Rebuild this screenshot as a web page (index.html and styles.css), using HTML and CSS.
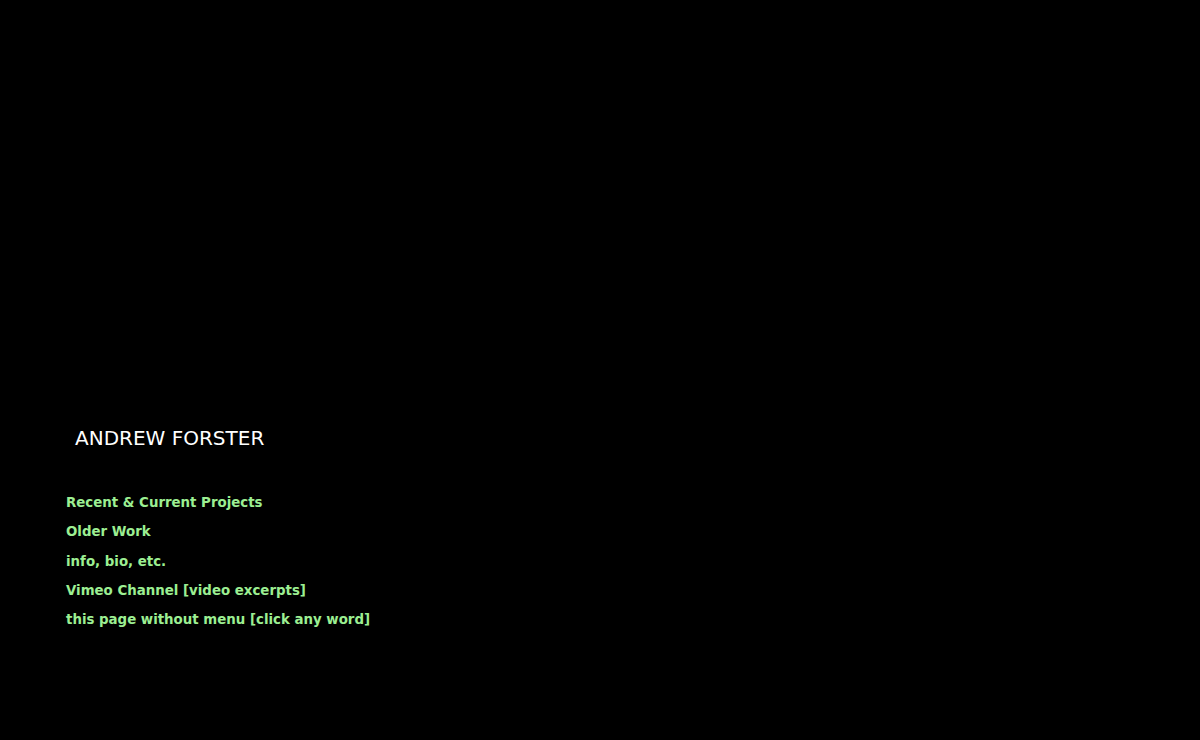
FILE: index.html
```html
<!DOCTYPE html>
<html>
<head>
<meta charset="utf-8">
<title>Andrew Forster</title>
<link rel="stylesheet" href="styles.css">
</head>
<body>
<div class="page">
  <h1 class="name">ANDREW FORSTER</h1>
  <nav class="menu">
    <a href="#">Recent &amp; Current Projects</a>
    <a href="#">Older Work</a>
    <a href="#">info, bio, etc.</a>
    <a href="#">Vimeo Channel [video excerpts]</a>
    <a href="#">this page without menu [click any word]</a>
  </nav>
</div>
</body>
</html>
```

FILE: styles.css
```css
html, body {
  margin: 0;
  padding: 0;
  background: #000;
  height: 100%;
}
.page {
  padding: 425px 0 0 66px;
  font-family: "DejaVu Sans", Verdana, sans-serif;
}
.name {
  margin: 0 0 0 9px;
  font-size: 20px;
  font-weight: normal;
  color: #fff;
  line-height: 26px;
}
.menu {
  display: flex;
  flex-direction: column;
  align-items: flex-start;
  margin-top: 37px;
}
.menu a {
  color: #9cef92;
  text-decoration: none;
  font-weight: bold;
  font-size: 13.35px;
  line-height: 29.3px;
}
```
